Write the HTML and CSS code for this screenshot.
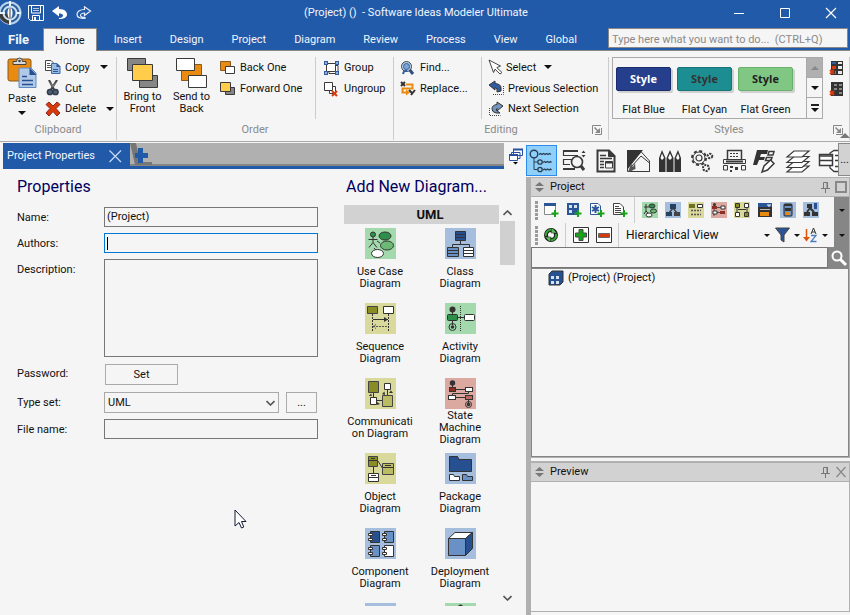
FILE: index.html
```html
<!DOCTYPE html>
<html lang="en">
<head>
<meta charset="utf-8">
<title>(Project) () - Software Ideas Modeler Ultimate</title>
<link rel="stylesheet" href="styles.css">
</head>
<body>
<header class="titlebar">
  <div class="quick">
    <svg class="logo" width="22" height="24" viewBox="0 0 22 24"><circle cx="10" cy="12" r="10.500" fill="#2d5f9c" stroke="#b9d3ea" stroke-width="2"/><path d="M0 13H9V23Q3 22 0 17Z" fill="#3c3c3c"/><circle cx="10" cy="12" r="6.500" fill="none" stroke="#cfe2f2" stroke-width="2"/><path d="M10 0V5M10 19v5M16 12h5M0 12h5" stroke="#e8f2fa" stroke-width="2"/><ellipse cx="10" cy="12" rx="2.500" ry="5.500" fill="#fff"/><path d="M10 7v11" stroke="#9d9d9d" stroke-width="2"/></svg>
    <button aria-label="Save"><svg width="16" height="16" viewBox="0 0 16 16"><path d="M.5.500H15.500V15.500H2.500L.5 13.500Z" fill="none" stroke="#fff"/><path d="M3.500.500V8H12.500V.500M4.500 15.500V10.500H11.500V15.500" fill="none" stroke="#fff"/><path d="M5 3.500H11M5 5.500H11" stroke="#b7c9e6"/><path d="M6 12h2v3H6z" fill="#fff"/></svg></button>
    <button aria-label="Undo"><svg width="16" height="14" viewBox="0 0 16 14"><path d="M0 5 7 0V3C13 3 15 6 15 8.500C15 11 12.500 13 7 13V12C10 12 11 10.500 11 9.500C11 8 9 7.500 7 7.500V10.500Z" fill="#fff"/></svg></button>
    <button aria-label="Redo"><svg width="16" height="14" viewBox="0 0 16 14"><path d="M14.500 5 8.500.800V3.500C3.500 3.500 1 6 1 8.500C1 11 3.500 12.500 9 12.500V11.500C6 11.500 4.500 10.500 4.500 9.500C4.500 8 6.500 7 8.500 7V9.500Z" fill="none" stroke="#e7eefa" stroke-width="1.200"/></svg></button>
  </div>
  <h1 class="apptitle">(Project) () &nbsp;- Software Ideas Modeler Ultimate</h1>
  <div class="winbtns">
    <button aria-label="Minimize"><svg width="12" height="12"><path d="M1 6.500H11" stroke="#fff"/></svg></button>
    <button aria-label="Maximize"><svg width="12" height="12"><path d="M1.500 1.500H10.500V10.500H1.500Z" fill="none" stroke="#fff"/></svg></button>
    <button aria-label="Close"><svg width="12" height="12"><path d="M1 1 11 11M11 1 1 11" stroke="#fff" stroke-width="1.200"/></svg></button>
  </div>
</header>
<nav class="tabs">
  <button class="file">File</button><button class="active">Home</button><button>Insert</button><button>Design</button><button>Project</button><button>Diagram</button><button>Review</button><button>Process</button><button>View</button><button>Global</button>
  <input class="tellme" aria-label="Command search" placeholder="Type here what you want to do...  (CTRL+Q)">
</nav>
<section class="ribbon">
  <div class="group">
    <div class="tools">
      <button class="big paste"><svg width="30" height="32" viewBox="0 0 30 32"><rect x="1" y="2" width="23" height="22" rx="2" fill="#e88b10" stroke="#8a5a1c"/><path d="M6 7.500V4.500H9.500Q9.500 1 12.500 1T15.500 4.500H19V7.500Z" fill="#d9d9d9" stroke="#444"/><circle cx="12.500" cy="4" r="1.300" fill="#444"/><path d="M12 11H24L29 16V30.500H12Z" fill="#b0c9e8" stroke="#5e8ac4"/><path d="M22.500 10.500V18H29.500Z" fill="#26508f"/><path d="M15 19.500h5M15 23.500H26M15 27.500H26" stroke="#26508f" stroke-width="1.500"/></svg>Paste<i class="arr"></i></button>
      <div class="stack">
        <button><svg width="16" height="16" viewBox="0 0 16 16"><path d="M.5 1.500H6L8.500 4V11.500H.500Z" fill="#fff" stroke="#444"/><path d="M2 4.500H5M2 6.500H6M2 8.500H6" stroke="#555"/><path d="M6.500 4.500H12L15 7.500V14.500H6.500Z" fill="#9bbbe2" stroke="#3a6aaa"/><path d="M11.500 4V8H15.500Z" fill="#2b5597"/><path d="M8 10.500H13M8 12.500H13" stroke="#2b5597"/></svg>Copy<i class="arr"></i></button>
        <button><svg width="16" height="16" viewBox="1 0 16 16"><path d="M5 0 10 9.500M13 0 7 9.500" stroke="#3c3c3c" stroke-width="2"/><path d="M4 0 9 8V5ZM14 0 9 8V5Z" fill="#777"/><circle cx="6" cy="12" r="2.600" fill="#56616f" stroke="#2c3e50" stroke-width="1.500"/><circle cx="11.500" cy="12" r="2.600" fill="#56616f" stroke="#2c3e50" stroke-width="1.500"/></svg>Cut</button>
        <button><svg width="16" height="16" viewBox="0 0 16 16"><path d="M1 3.500 4 1 8 5 12 1 15 3.500 11 7.500 15 12 12 15 8 10.500 4 15 1 12 5 7.500Z" fill="#d93a0c" stroke="#8b2a16"/></svg>Delete<i class="arr"></i></button>
      </div>
    </div>
    <div class="caption">Clipboard</div>
  </div>
  <div class="group">
    <div class="tools">
      <button class="big"><svg width="32" height="32" viewBox="0 0 32 32"><path d="M.5 1.500H18.500V13.500H.500ZM12.500 18.500H30.500V30.500H12.500Z" fill="#868686" stroke="#3a3a3a"/><path d="M5.500 7.500H25.500V23.500H5.500Z" fill="#ffcd4b" stroke="#3a3a3a"/></svg>Bring to<br>Front</button>
      <button class="big"><svg width="32" height="32" viewBox="0 0 32 32"><path d="M5.500 7.500H25.500V23.500H5.500Z" fill="#e88b10" stroke="#8a5a1c"/><path d="M.5 1.500H18.500V13.500H.500ZM12.500 18.500H30.500V30.500H12.500Z" fill="#fff" stroke="#3a3a3a"/></svg>Send to<br>Back</button>
      <div class="stack">
        <button><svg width="16" height="16" viewBox="0 0 16 16"><path d="M.5 1.500H10.500V10.500H.500Z" fill="#e88b10" stroke="#8a5a1c"/><path d="M5.500 6.500H14.500V13.500H5.500Z" fill="#fff" stroke="#3a3a3a"/></svg>Back One</button>
        <button><svg width="16" height="16" viewBox="0 0 16 16"><path d="M5.500 6.500H14.500V13.500H5.500Z" fill="#868686" stroke="#3a3a3a"/><path d="M.5 1.500H10.500V10.500H.500Z" fill="#ffcd4b" stroke="#3a3a3a"/></svg>Forward One</button>
      </div>
      <div class="stack split">
        <button><svg width="16" height="16" viewBox="0 0 16 16"><path d="M2.500 3.500H11.500V11.500H2.500ZM12 5.500H14V13.500H5V12" fill="#fff" stroke="#3a3a3a"/><path d="M0 1h4v4H0zM11 1h4v4h-4zM0 11h4v4H0zM11 11h4v4h-4z" fill="#315d9e"/><path d="M1 2h2v2H1zM12 2h2v2h-2zM1 12h2v2H1zM12 12h2v2h-2z" fill="#8eaede"/></svg>Group</button>
        <button><svg width="16" height="16" viewBox="0 0 16 16"><path d="M.5 1.500H8.500V9.500H.500ZM9 5.500H11.500V12.500H5.500V10" fill="#fff" stroke="#3a3a3a"/><path d="M8 10 13 15M13 10 8 15" stroke="#d93a0c" stroke-width="2"/></svg>Ungroup</button>
      </div>
    </div>
    <div class="caption">Order</div>
  </div>
  <div class="group">
    <div class="tools">
      <div class="stack">
        <button><svg width="16" height="16" viewBox="0 0 16 16"><path d="M9 9 13 14" stroke="#2f4f80" stroke-width="3"/><circle cx="6.500" cy="6.500" r="5" fill="#b9d3ee" stroke="#444"/><circle cx="6.500" cy="6.500" r="3" fill="#7fa4d1" stroke="#315d9e"/><path d="M3 14Q4 10 7 11" fill="none" stroke="#315d9e" stroke-width="2"/></svg>Find...</button>
        <button><svg width="16" height="16" viewBox="0 0 16 16"><path d="M1 1 5 5M5 1 1 5M9 9 12 12M15 9 11 14" stroke="#333" stroke-width="2"/><path d="M6 3.500H12.500V7.500H2.500V11.500H8" fill="none" stroke="#e88b10" stroke-width="2"/><path d="M6 8.500 10 11.500 6 14.500Z" fill="#e88b10"/></svg>Replace...</button>
      </div>
      <div class="stack split">
        <button><svg width="16" height="16" viewBox="0 0 16 16"><path d="M1 1 12.500 7 8.800 8.600 14 13.500 12 15 7 10.200 5.500 13.500Z" fill="#fff" stroke="#444"/></svg>Select<i class="arr"></i></button>
        <button><svg width="18" height="16" viewBox="0 0 18 16"><path d="M1 5 7 1V3.500Q13 4 13 8V11L9 12Q10 8 7 7.500V10Z" fill="#315d9e" stroke="#333"/><path d="M5 14.500H15.500V6" fill="none" stroke="#444" stroke-dasharray="1 1"/></svg>Previous Selection</button>
        <button><svg width="18" height="16" viewBox="0 0 18 16"><path d="M15 5 9 1V3.500Q4 4 4 8Q4 11 8 12H12L8 9 9 7.500V10Z" fill="#7396c0" stroke="#333"/><path d="M1.500 7V14.500H12.500" fill="none" stroke="#444" stroke-dasharray="1 1"/></svg>Next Selection</button>
      </div>
    </div>
    <div class="caption">Editing<button class="launch" aria-label="Editing options"><svg width="10" height="10"><path d="M.5 9V.500H9M9.500 3V9.500H3" fill="none" stroke="#888"/><path d="M2.500 2.500 7 7" stroke="#888" stroke-width="1.500"/><path d="M8 3V8H3Z" fill="#888"/></svg></button></div>
  </div>
  <div class="group">
    <div class="tools">
      <div class="gallery">
        <button class="style"><b class="blue">Style</b>Flat Blue</button>
        <button class="style"><b class="cyan">Style</b>Flat Cyan</button>
        <button class="style"><b class="green">Style</b>Flat Green</button>
        <div class="gscroll"><button class="off" aria-label="Scroll up"><i class="arr up"></i></button><button aria-label="Scroll down"><i class="arr"></i></button><button class="more" aria-label="More styles"><i class="arr"></i></button></div>
      </div>
      <div class="stack bare">
        <button aria-label="Clear style"><svg width="16" height="16" viewBox="0 0 16 16"><path d="M2 1h12v14H2z" fill="#333"/><path d="M3 2h4v2H3z" fill="#315d9e"/><path d="M9 2h4v2H9zM9 6h4v3H9zM9 11h4v3H9z" fill="#e8e8e8"/><path d="M3 6h4v3H3z" fill="#d93a0c"/><path d="M1 10 5 14M5 10 1 14" stroke="#d93a0c" stroke-width="2"/><path d="M6 11h1v3H6z" fill="#52a152"/></svg></button>
        <button aria-label="Clear all styles"><svg width="16" height="16" viewBox="0 0 16 16"><path d="M2 1h12v14H2z" fill="#333"/><path d="M5 3h3v2H5zM10 3h3v2h-3zM5 7h3v2H5zM10 7h3v2h-3zM10 11h3v2h-3z" fill="#888"/><path d="M1 10 5 14M5 10 1 14" stroke="#d93a0c" stroke-width="2"/></svg></button>
      </div>
    </div>
    <div class="caption">Styles<button class="launch" aria-label="Style options"><svg width="10" height="10"><path d="M.5 9V.500H9M9.500 3V9.500H3" fill="none" stroke="#888"/><path d="M2.500 2.500 7 7" stroke="#888" stroke-width="1.500"/><path d="M8 3V8H3Z" fill="#888"/></svg></button></div>
  </div>
  <button class="collapse" aria-label="Collapse ribbon"><svg width="10" height="5"><path d="M0 5 5 0 10 5Z" fill="#777"/></svg></button>
</section>
<main class="main">
  <section class="doc">
    <div class="doctabs"><div class="doctab">Project Properties<button aria-label="Close tab"><svg width="13" height="13"><path d="M.5.500 12 12M12 .500.500 12" stroke="#c9dcf5" stroke-width="1.200"/></svg></button></div><button class="newtab" aria-label="New tab"><svg width="22" height="22" viewBox="0 0 22 22"><path d="M0 0H6Q8 8 9 15L13 19H22V22H5Z" fill="#767676"/><path d="M8 5h5v5h5v5h-5v5H8v-5H5v-5h3z" fill="#225aaa"/></svg></button></div>
    <div class="docbody">
      <form class="props">
        <h2>Properties</h2>
        <div class="row"><label for="name">Name:</label><input id="name" value="(Project)"></div>
        <div class="row"><label for="authors">Authors:</label><input id="authors" class="focus"></div>
        <div class="row"><label for="desc">Description:</label><textarea id="desc"></textarea></div>
        <div class="row"><label for="pw">Password:</label><button type="button" id="pw" class="set">Set</button></div>
        <div class="row"><label for="type">Type set:</label><div class="pick"><select id="type"><option>UML</option></select><svg width="9" height="6"><path d="M.5 1 4.500 5 8.500 1" fill="none" stroke="#555" stroke-width="1.600"/></svg></div><button type="button" class="dots" aria-label="Browse type sets">...</button></div>
        <div class="row"><label for="file">File name:</label><input id="file"></div>
      </form>
      <section class="add">
        <h2>Add New Diagram...</h2>
        <div class="scroller">
          <div class="list">
            <h3>UML</h3>
            <div class="grid">
              <button><svg class="g" viewBox="0 0 31 31"><circle cx="8" cy="6.500" r="2.500" fill="#2e8f4b" stroke="#333"/><path d="M8 9V14.500L4 19.500M8 14.500 12 19.500M3.500 11.500H12.500M12 13 15 15M9 20 11 22" stroke="#333" fill="none"/><ellipse cx="20" cy="8" rx="6" ry="4" fill="#2e8f4b" stroke="#333"/><ellipse cx="22" cy="17.500" rx="6.500" ry="4.500" fill="#6cba74" stroke="#333"/><ellipse cx="12.500" cy="25.500" rx="6" ry="4" fill="#fff" stroke="#333"/></svg><span>Use Case Diagram</span></button>
              <button><svg class="b" viewBox="0 0 31 31"><path d="M15.500 12V17M7.500 20V16.500H24.500V20" stroke="#333" fill="none"/><path d="M10.500 3.500H20.500V12.500H10.500Z" fill="#26508f" stroke="#333"/><path d="M2.500 19.500H13.500V28.500H2.500Z" fill="#6a91c5" stroke="#333"/><path d="M18.500 19.500H28.500V28.500H18.500Z" fill="#fff" stroke="#333"/><path d="M10 6.500H21M10 9.500H21M2 22.500H13M2 25.500H13M18 22.500H29M18 25.500H29" stroke="#333"/></svg><span>Class Diagram</span></button>
              <button><svg class="y" viewBox="0 0 31 31"><path d="M2.500 3.500H12.500V10.500H2.500Z" fill="#8a8c26" stroke="#444"/><path d="M18.500 3.500H28.500V10.500H18.500Z" fill="#fff" stroke="#333"/><path d="M7.500 11V29M23.500 11V29" stroke="#333" stroke-dasharray="2 1"/><path d="M8 16.500H23" stroke="#333"/><path d="M19 14V19L23 16.500Z" fill="#333"/><path d="M8 23.500H23M11 21.500 8 23.500 11 25.500" stroke="#555" stroke-dasharray="2 1" fill="none"/></svg><span>Sequence Diagram</span></button>
              <button><svg class="g" viewBox="0 0 31 31"><path d="M7.500 8V22M12 14.500H20" stroke="#333"/><circle cx="7.500" cy="6.500" r="3" fill="#333"/><rect x="2.500" y="11.500" width="10" height="6" rx="1" fill="#2e8f4b" stroke="#333"/><rect x="19.500" y="11.500" width="10" height="6" rx="1" fill="#fff" stroke="#333"/><path d="M15.500 3V29" stroke="#333" stroke-dasharray="1 1"/><circle cx="7.500" cy="24" r="3.500" fill="none" stroke="#333"/><circle cx="7.500" cy="24" r="1.800" fill="#333"/></svg><span>Activity Diagram</span></button>
              <button><svg class="y" viewBox="0 0 31 31"><path d="M8.500 14V19M12 22.500H17M22.500 12V17" stroke="#333"/><path d="M3.500 3.500H13.500V14.500H3.500Z" fill="#8a8c26" stroke="#444"/><path d="M19.500 5.500H25.500V11.500H19.500Z" fill="#fff" stroke="#333"/><path d="M17.500 17.500H27.500V28.500H17.500Z" fill="#b9bc62" stroke="#444"/><path d="M5.500 19.500H11.500V26.500H5.500Z" fill="#fff" stroke="#333"/><path d="M4 18 6 15.500 7 18ZM12 24 15 26 12 27ZM17 16 19.500 13.500 20 17ZM24 15H28L26 12.500Z" fill="#333"/></svg><span>Communication Diagram</span></button>
              <button><svg class="r" viewBox="0 0 31 31"><path d="M7.500 7V10M11 11.500H20M7.500 17V15.500H23.500V14M11 19.500H20M23.500 21V25" stroke="#333" fill="none"/><circle cx="7.500" cy="5" r="2.700" fill="#333"/><rect x="4.500" y="9.500" width="6" height="4" fill="#8d2f25" stroke="#333"/><rect x="20.500" y="9.500" width="7" height="4" fill="#fff" stroke="#333"/><rect x="3.500" y="17.500" width="7" height="4" fill="#fff" stroke="#333"/><rect x="20.500" y="17.500" width="7" height="4" fill="#bf6a60" stroke="#333"/><circle cx="23.500" cy="26.500" r="3" fill="none" stroke="#333"/><circle cx="23.500" cy="26.500" r="1.800" fill="#333"/></svg><span>State Machine Diagram</span></button>
              <button><svg class="y" viewBox="0 0 31 31"><path d="M8.500 14V20M13 8 18 16" stroke="#333"/><path d="M3.500 3.500H12.500V13.500H3.500Z" fill="#8a8c26" stroke="#444"/><path d="M17.500 10.500H28.500V21.500H17.500Z" fill="#b9bc62" stroke="#444"/><path d="M3.500 20.500H13.500V28.500H3.500Z" fill="#fff" stroke="#333"/><path d="M3 7.500H12M18 14.500H28M3 24.500H13M6 5.500H10M20 12.500H26M6 22.500H11" stroke="#333"/></svg><span>Object Diagram</span></button>
              <button><svg class="b" viewBox="0 0 31 31"><path d="M4.500 18.500V3.500H12.500L14 6.500H26.500V18.500Z" fill="#26508f" stroke="#333"/><path d="M4.500 27.500V21.500H8.500L9.500 23.500H14.500V27.500Z" fill="#fff" stroke="#333"/><path d="M17.500 27.500V21.500H21.500L22.500 23.500H27.500V27.500Z" fill="#6a91c5" stroke="#333"/></svg><span>Package Diagram</span></button>
              <button><svg class="b" viewBox="0 0 31 31"><path d="M5.500 3.500H14.500V14.500H5.500Z" fill="#26508f" stroke="#333"/><path d="M19.500 3.500H28.500V14.500H19.500ZM5.500 17.500H14.500V28.500H5.500Z" fill="#6a91c5" stroke="#333"/><path d="M19.500 17.500H28.500V28.500H19.500Z" fill="#fff" stroke="#333"/><path d="M3.500 5.500h4v2h-4zM3.500 10.500h4v2h-4zM17.500 5.500h4v2h-4zM17.500 10.500h4v2h-4zM3.500 19.500h4v2h-4zM3.500 24.500h4v2h-4zM17.500 19.500h4v2h-4zM17.500 24.500h4v2h-4z" fill="#fff" stroke="#333"/></svg><span>Component Diagram</span></button>
              <button><svg class="b" viewBox="0 0 31 31"><path d="M3.500 10.500H20.500V27.500H3.500Z" fill="#6a91c5" stroke="#333"/><path d="M3.500 10.500 10 4.500H27.500L20.500 10.500Z" fill="#fff" stroke="#333"/><path d="M20.500 10.500 27.500 4.500V20.500L20.500 27.500Z" fill="#26508f" stroke="#333"/></svg><span>Deployment Diagram</span></button>
              <button aria-label="Composite structure diagram"><svg class="b" viewBox="0 0 31 31"></svg></button>
              <button aria-label="Interaction overview diagram"><svg class="g" viewBox="0 0 31 31"><circle cx="15.500" cy="4" r="2.500" fill="#333"/></svg></button>
            </div>
          </div>
          <div class="sbar"><svg width="9" height="6"><path d="M.5 5 4.500 1 8.500 5" fill="none" stroke="#555" stroke-width="1.600"/></svg><i></i><svg width="9" height="6"><path d="M.5 1 4.500 5 8.500 1" fill="none" stroke="#555" stroke-width="1.600"/></svg></div>
        </div>
      </section>
    </div>
    <button class="windows" aria-label="Window list"><svg width="15" height="17" viewBox="0 0 15 17"><path d="M5.500 1.500H14.500V7.500H5.500ZM3.500 4.500H12V10.500H3.500Z" fill="#fff" stroke="#2850a0"/><path d="M1.500 6.500H9.500V12.500H1.500Z" fill="#fff" stroke="#2850a0"/><path d="M5 1.500H15M1 7H10" stroke="#2850a0" stroke-width="2"/><path d="M5 14H10L7.500 16.500Z" fill="#000"/></svg></button>
    <svg class="pointer" width="13" height="20" viewBox="0 0 13 20"><path d="M1 1V17L5 13.500 7.500 19 9.800 18 7.500 12.500H12Z" fill="#fff" stroke="#111a33"/></svg>
  </section>
  <aside class="side">
    <div class="views">
      <button class="on" aria-label="Project"><svg width="26" height="26" viewBox="0 0 26 26" fill="none" stroke="#2b3f52"><circle cx="5" cy="6" r="3.800" stroke-width="1.400"/><circle cx="11" cy="14" r="2.200" stroke-width="1.300"/><circle cx="11" cy="21.500" r="2.200" stroke-width="1.300"/><path d="M5 10V21.500H8.500M5 14H8.500"/><path d="M10 6.500l1.500-1 1.500 1 1.500-1 1.500 1 1.500-1 1.500 1 1.500-1 1.500 1M14 14.500l1.500-1 1.500 1 1.500-1 1.500 1 1.500-1 1 1M14 22l1.500-1 1.500 1 1.500-1 1.500 1 1.500-1 1 1" stroke-width="1.300"/></svg></button>
      <button aria-label="Find"><svg width="26" height="26" viewBox="0 0 26 26" fill="none" stroke="#3a3a3a"><path d="M17 2.500H2.500V7.500H17M11 11.500H2.500V16.500H9M13 21.500H2.500" stroke-width="1.200"/><path d="M2 2h15v2H2zM2 20h12v2H2z" fill="#3a3a3a" stroke="none"/><circle cx="16" cy="14" r="5.500" stroke-width="1.600"/><path d="M20 18 23 22" stroke-width="3"/><path d="M20.500 7H24.500L22.500 9.500ZM20.500 5H24.500L22.500 2.500Z" fill="#3a3a3a" stroke="none"/></svg></button>
      <button aria-label="Documentation"><svg width="26" height="26" viewBox="0 0 26 26" fill="none" stroke="#3a3a3a"><path d="M4.500 2.500H16L21.500 8V23.500H4.500Z" stroke-width="2"/><path d="M15.500 2V8.500H22Z" fill="#3a3a3a"/><path d="M7 7.500H13M7 10.500H19M7 13.500H11M7 16.500H11M7 19.500H11" stroke-width="1.500"/><path d="M12.500 13.500H19.500V20H12.500Z"/><path d="M12.500 14.500H19.500" stroke-width="2"/></svg></button>
      <button aria-label="Style"><svg width="26" height="26" viewBox="0 0 26 26"><path d="M2.500 2.500H15L24.500 13V23.500H2.500Z" fill="#f5f5f5" stroke="#3a3a3a"/><path d="M2 2H18L2 22Z" fill="#333"/><path d="M6 19 16 8 24.500 15V23.500H7Z" fill="#f5f5f5" stroke="#3a3a3a"/><path d="M3 24 6 16 8 19 10 15 10.500 21Z" fill="#555"/></svg></button>
      <button aria-label="Colors"><svg width="26" height="26" viewBox="0 0 26 26"><path d="M2 10 5 2 8.500 10V24H2ZM9.500 10 13 2 16.500 10V24H9.500ZM17.500 10 21 2 24 10V24H17.500Z" fill="#333"/><path d="M3.500 10 5 5.500 7 10 5 12ZM11 10 13 5.500 15 10 13 12ZM19 10 21 5.500 22.500 10 21 12Z" fill="#fff"/></svg></button>
      <button aria-label="Settings"><svg width="26" height="26" viewBox="0 0 26 26" fill="none" stroke="#3a3a3a"><circle cx="10" cy="10" r="7" stroke-width="2" stroke-dasharray="3 2.500"/><circle cx="10" cy="10" r="6"/><circle cx="10" cy="10" r="3" stroke-width="1.200"/><circle cx="21" cy="8" r="2.300" stroke-width="2" stroke-dasharray="2 1"/><circle cx="17" cy="20" r="3" stroke-width="2" stroke-dasharray="2 1"/></svg></button>
      <button aria-label="Generate"><svg width="26" height="26" viewBox="0 0 26 26" fill="none" stroke="#3a3a3a"><path d="M6.500 11V2.500H20.500V11" stroke-width="1.500"/><path d="M9 5.500H18M9 8.500H18" stroke-dasharray="2 1"/><path d="M2.500 15.500V11.500H24.500V15.500Z"/><path d="M5 13.500H22" stroke-width="2"/><path d="M2.500 17.500H6.500V22H2.500ZM20.500 17.500H24.500V22H20.500Z"/><path d="M9 18h3v2H9zM14 19h3v3h-3zM9 22h2v2H9z" fill="#3a3a3a" stroke="none"/></svg></button>
      <button aria-label="Format"><svg width="26" height="26" viewBox="0 0 26 26"><path d="M4 2H15L14 6H8L7 9H12L11 12H6L4 17H0Z" fill="#333"/><path d="M16 3.500H21L20 7H15ZM13.500 9.500H19L18 12.500H12.500Z" fill="#fff" stroke="#3a3a3a" stroke-width="1.500"/><path d="M9 24 11 18 17.500 12 21 15.500 14.500 22Z" fill="#fff" stroke="#3a3a3a" stroke-width="1.500"/></svg></button>
      <button aria-label="Layers"><svg width="26" height="26" viewBox="0 0 26 26" fill="#fff" stroke="#3a3a3a" stroke-width="1.200"><path d="M2 24 9 18H24L17 24Z"/><path d="M2 19.500 9 13.500H24L17 19.500Z"/><path d="M2 14.500 9 8.500H24L17 14.500Z"/><path d="M2 9 9 3H24L17 9Z"/></svg></button>
      <button aria-label="Model"><svg width="26" height="26" viewBox="0 0 26 26" fill="#fff" stroke="#3a3a3a"><path d="M13 8V5L17 2.500H25V23.500H17L13 20V17" stroke-width="1.300"/><path d="M2.500 6.500H15.500V17.500H2.500Z" stroke-width="1.500"/><path d="M2 8H16M3 12.500H15M18 7.500H25M18 12.500H25M18 18.500H25" stroke-width="1.500"/></svg></button>
      <button class="etc">...</button>
    </div>
    <div class="panels">
      <section class="panel proj">
        <header><svg width="9" height="10"><path d="M0 4 4.500 0 9 4ZM0 6H9L4.500 10Z" fill="#777"/></svg><h2>Project</h2><svg width="11" height="12"><path d="M3.500 7V1.500H7.500V7M1 7.500H10M5.500 8V12" fill="none" stroke="#777"/><path d="M7 1V7" stroke="#777"/></svg><svg width="12" height="12"><path d="M1 1H11V11H1Z" fill="none" stroke="#888" stroke-width="2"/></svg></header>
        <div class="bar">
          <i class="grip"></i>
          <button aria-label="New diagram"><svg width="16" height="16" viewBox="0 0 16 16"><path d="M1.500 1.500H12.500V12.500H1.500Z" fill="#fff" stroke="#888"/><path d="M1 1h12v3H1z" fill="#2b5597"/><path d="M12 8v7M8.500 11.500h7" stroke="#18a318" stroke-width="2"/></svg></button>
          <button aria-label="New project"><svg width="16" height="16" viewBox="0 0 16 16"><path d="M1 1h12v12H1z" fill="#2b5597"/><path d="M3 3h3v3H3zM8 3h3v3H8zM3 8h3v3H3z" fill="#d3e1f3"/><path d="M12 8v7M8.500 11.500h7" stroke="#18a318" stroke-width="2"/></svg></button>
          <button aria-label="New element"><svg width="16" height="16" viewBox="0 0 16 16"><path d="M1.500 1.500H9L11.500 4V12.500H1.500Z" fill="#fff" stroke="#2b5597"/><path d="M6.500 3v8M3 5l7 4M10 5 3 9" stroke="#2b5597" stroke-width="2"/><path d="M12 8v7M8.500 11.500h7" stroke="#18a318" stroke-width="2"/></svg></button>
          <button aria-label="New document"><svg width="16" height="16" viewBox="0 0 16 16"><path d="M1.500 1.500H8L11.500 5V12.500H1.500Z" fill="#fff" stroke="#444"/><path d="M3 4.500H7M3 6.500H9M3 8.500H9M3 10.500H9" stroke="#444"/><path d="M12 8v7M8.500 11.500h7" stroke="#18a318" stroke-width="2"/></svg></button>
          <i class="vr"></i>
          <button aria-label="Use case diagram"><svg class="g" width="16" height="16" viewBox="0 0 16 16"><path d="M4 2V9M2 5H7M4 9 2 12M4 9l3 3" stroke="#333"/><ellipse cx="10" cy="4" rx="3" ry="2" fill="#2e8f4b" stroke="#333"/><ellipse cx="11.500" cy="9" rx="3" ry="2" fill="#6cba74" stroke="#333"/><ellipse cx="7" cy="13" rx="3" ry="2" fill="#fff" stroke="#333"/></svg></button>
          <button aria-label="Class diagram"><svg class="b" width="16" height="16" viewBox="0 0 16 16"><path d="M8 6 4 11M8 6l4 5" stroke="#444" stroke-width="1.500"/><path d="M5 2h6v5H5zM1 10h6v4H1z" fill="#26405f"/><path d="M9 10h6v4H9z" fill="#444"/></svg></button>
          <button aria-label="Sequence diagram"><svg class="y" width="16" height="16" viewBox="0 0 16 16"><path d="M1 2h6v4H1z" fill="#6f7126"/><path d="M9.500 2.500h5v3h-5z" fill="#fff" stroke="#333"/><path d="M3 8.500H13M3 12.500H13" stroke="#555" stroke-width="1.500" stroke-dasharray="2 1"/></svg></button>
          <button aria-label="State machine diagram"><svg class="r" width="16" height="16" viewBox="0 0 16 16"><path d="M3 2V14M3 5.500H13M3 10.500H13" stroke="#555"/><circle cx="3.500" cy="2.500" r="1.500" fill="#333"/><path d="M1 4h5v3H1zM9 9h5v3H9z" fill="#8d2f25"/><path d="M10 4h4v3h-4zM2 9h4v3H2z" fill="#fff" stroke="#333"/></svg></button>
          <button aria-label="Flowchart"><svg class="y" width="16" height="16" viewBox="0 0 16 16"><path d="M3 6V10M13 6V10M4 7.500H12" stroke="#333"/><path d="M1.500 1.500h4v4h-4zM10.500 10.500h4v4h-4z" fill="#8a8c26" stroke="#333"/><path d="M10.500 1.500h4v4h-4zM1.500 10.500h4v4h-4z" fill="#fff" stroke="#333"/></svg></button>
          <button aria-label="User interface diagram"><svg width="16" height="16" viewBox="0 0 16 16"><path d="M1 1h14v14H1z" fill="#333"/><path d="M1 1h14v4H1z" fill="#2b5597"/><path d="M3 10h9v4H3z" fill="#e88b10"/><path d="M3 7.500h10" stroke="#bbb"/><path d="M11 2v2h2V2" fill="none" stroke="#fff"/></svg></button>
          <button aria-label="Robustness diagram"><svg class="b" width="16" height="16" viewBox="0 0 16 16"><rect x="4" y="2" width="8" height="12" rx="1" fill="#6a91c5" stroke="#222"/><path d="M4 2h8v2H4zM5 6h6v3H5z" fill="#333"/><path d="M6 10h4v3H6z" fill="#e88b10"/></svg></button>
          <button aria-label="Class diagram from model"><svg class="b" width="16" height="16" viewBox="0 0 16 16"><path d="M4 2h5v4H4zM1 10h6v4H1z" fill="#333"/><path d="M11 1h3v6h-3z" fill="#26508f"/><path d="M9 10h6v4H9z" fill="#333"/><path d="M7 6 4 10M7 6l4 4" stroke="#333" stroke-width="2"/></svg></button>
          <button class="over" aria-label="More tools"><i class="arr sm"></i></button>
        </div>
        <div class="bar two">
          <i class="grip"></i>
          <button aria-label="Refresh"><svg width="16" height="16" viewBox="0 0 16 16"><circle cx="8" cy="8" r="5" fill="none" stroke="#222" stroke-width="4"/><path d="M3 9A5 5 0 0 1 11 4M13 7A5 5 0 0 1 5 12" fill="none" stroke="#35a035" stroke-width="2"/><path d="M9 1 14 6H8ZM7 15 2 10H8Z" fill="#58c058" stroke="#222" stroke-width=".5"/></svg></button>
          <i class="vr"></i>
          <button aria-label="Expand all"><svg width="16" height="16" viewBox="0 0 16 16"><path d="M.5.500H15.500V15.500H.500Z" fill="#fff" stroke="#333"/><path d="M6 2.500H10V6H13.500V10H10V13.500H6V10H2.500V6H6Z" fill="#18a318" stroke="#444"/></svg></button>
          <button aria-label="Collapse all"><svg width="16" height="16" viewBox="0 0 16 16"><path d="M.5.500H15.500V15.500H.500Z" fill="#fff" stroke="#333"/><path d="M2.500 6.500H13.500V10.500H2.500Z" fill="#d93a0c" stroke="#666"/></svg></button>
          <i class="vr"></i>
          <button class="mode">Hierarchical View<i class="arr sm"></i></button>
          <button class="drop" aria-label="Filter"><svg width="15" height="16" viewBox="0 0 15 16"><path d="M.5 1H14.500L9 8V15L6 13V8Z" fill="#2b5597" stroke="#444"/></svg><i class="arr sm"></i></button>
          <button class="drop" aria-label="Sort"><svg width="15" height="16" viewBox="0 0 15 16"><path d="M3.500 2V12" stroke="#e0540c" stroke-width="1.500"/><path d="M0 10H7L3.500 14.500Z" fill="#e0540c"/><path d="M8 7 10.500 1 13 7M9 5H12" fill="none" stroke="#333"/><path d="M8 8.500H13L8 14.500H13.500" fill="none" stroke="#4f7dc0" stroke-width="1.300"/></svg><i class="arr sm"></i></button>
          <button class="over" aria-label="More options"><i class="arr sm"></i></button>
        </div>
        <div class="find"><input aria-label="Search project"><button aria-label="Search"><svg width="18" height="18" viewBox="0 0 18 18"><circle cx="7" cy="7" r="4.500" fill="none" stroke="#fff" stroke-width="2"/><path d="M10.500 10.500 16 16" stroke="#fff" stroke-width="3"/></svg></button></div>
        <div class="tree"><a href="#project"><svg width="16" height="16" viewBox="0 0 16 16"><path d="M1 4 4 1H15V12L12 15H1Z" fill="#26508f" stroke="#333"/><path d="M3 6h3v3H3zM8 6h3v3H8zM3 11h3v3H3zM8 11h3v3H8z" fill="#d3e1f3"/></svg>(Project) (Project)</a></div>
      </section>
      <section class="panel prev">
        <header><svg width="9" height="10"><path d="M0 4 4.500 0 9 4ZM0 6H9L4.500 10Z" fill="#777"/></svg><h2>Preview</h2><svg width="11" height="12"><path d="M3.500 7V1.500H7.500V7M1 7.500H10M5.500 8V12" fill="none" stroke="#777"/><path d="M7 1V7" stroke="#777"/></svg><svg width="12" height="12"><path d="M1.500 1 10.500 11M10.500 1 1.500 11" fill="none" stroke="#888" stroke-width="1.200"/></svg></header>
        <div class="canvas"></div>
      </section>
    </div>
  </aside>
</main>
</body>
</html>
```
FILE: styles.css
```css
* { box-sizing: border-box; }

body {
  margin: 0;
  height: 100vh;
  display: flex;
  flex-direction: column;
  overflow: hidden;
  background: #f5f5f5;
  color: #111;
  font: 11px/14px Roboto, "Liberation Sans", sans-serif;
}

button, input, select, textarea { font: inherit; color: inherit; border-radius: 0; }
button { border: 0; padding: 0; margin: 0; background: none; }
svg { flex: none; display: block; }
h1, h2, h3 { margin: 0; font-weight: 400; }

.arr {
  flex: none;
  border: 4px solid transparent;
  border-top-color: #111;
  border-bottom: 0;
}
.arr.sm { border-width: 3px 3px 0; }
.arr.up { border-top: 0; border-bottom: 4px solid #888; }

/* title bar */
.titlebar {
  display: grid;
  grid-template-columns: 1fr auto 1fr;
  align-items: center;
  height: 27px;
  padding-bottom: 2px;
  background: #225aaa;
  color: #f2f6fc;
}
.quick { display: flex; align-items: center; gap: 8px; }
.quick .logo { margin-right: -2px; }
.apptitle { font-size: 11px; padding-right: 18px; }
.winbtns { display: flex; justify-content: flex-end; gap: 34px; padding-right: 13px; }

/* tabs */
.tabs {
  display: flex;
  height: 24px;
  background: #225aaa;
  color: #f2f6fc;
  border-bottom: 1px solid #888;
}
.tabs button { padding: 3px 14px 0; }
.tabs .file { font-weight: 700; font-size: 13px; padding: 3px 14px 0 8px; }
.tabs .active {
  background: #f5f5f5;
  color: #111;
  border: 1px solid #888;
  border-bottom: 0;
  margin: 1px 3px -1px 0;
  padding: 1px 11px 0;
}
.tellme {
  width: 240px;
  height: 20px;
  margin: 1px 2px 0 auto;
  padding: 2px 3px 0;
  border: 1px solid #888;
  background: #f5f5f5;
}
.tellme::placeholder { color: #8a8a8a; opacity: 1; white-space: pre; }

/* ribbon */
.ribbon {
  position: relative;
  display: grid;
  grid-template-columns: 117px 277px 215px 1fr;
  height: 91px;
  border-bottom: 1px solid #aaa;
}
.group {
  display: flex;
  flex-direction: column;
  margin: 6px 0 5px;
  border-right: 1px solid #ccc;
}
.tools { display: flex; height: 62px; padding-left: 7px; }
.caption { position: relative; text-align: center; color: #8a8a8a; line-height: 21px; }
.launch { position: absolute; right: 6px; top: 6px; }
.big {
  display: flex;
  flex-direction: column;
  align-items: center;
  width: 49px;
  line-height: 12px;
}
.big svg { margin-bottom: 2px; }
.paste { width: 30px; margin-right: 8px; }
.paste svg { margin-bottom: 4px; }
.paste .arr { margin-top: 6px; }
.stack { display: flex; flex-direction: column; }
.stack button { display: flex; align-items: center; gap: 4px; height: 21px; line-height: 15px; white-space: nowrap; }
.stack .arr { margin-left: 6px; }
.group:nth-child(2) .tools { padding-left: 1px; }
.group:nth-child(2) .stack { margin-left: 4px; }
.stack.split { margin-left: auto; border-left: 1px solid #ccc; padding-left: 8px; }
.group:nth-child(2) .stack.split { margin-left: auto; width: 78px; }
.group:nth-child(3) .tools { padding-left: 6px; }
.group:nth-child(3) .stack.split { width: 127px; padding-left: 6px; }
.group:nth-child(3) .stack.split button { gap: 2px; }

.group:last-child { border-right: 0; }
.group:nth-child(4) .tools { padding-left: 3px; gap: 6px; }
.gallery { display: flex; width: 211px; border: 1px solid #aaa; }
.style { width: 61px; display: flex; flex-direction: column; align-items: center; gap: 12px; padding-top: 9px; white-space: nowrap; }
.style b {
  width: 55px;
  border: 1px solid;
  border-radius: 2px;
  font: 700 11px/22px "Open Sans", sans-serif;
  box-shadow: 2px 2px 0 #d0d0d0;
}
.style .blue { background: #263f8c; border-color: #182c6e; color: #fff; }
.style .cyan { background: #1c8e92; border-color: #157578; color: #333; }
.style .green { background: #81c784; border-color: #68b36c; color: #222; }
.gscroll { margin-left: auto; width: 16px; border-left: 1px solid #aaa; display: grid; grid-template-rows: repeat(3, 20px); }
.gscroll button { display: flex; flex-direction: column; align-items: center; justify-content: center; border-bottom: 1px solid #aaa; }
.gscroll .off { background: #b0b0b0; }
.gscroll .more { border-bottom: 0; }
.more::before { content: ""; width: 8px; height: 2px; margin-bottom: 2px; background: #222; }
.collapse { position: absolute; right: 0; bottom: 3px; }

/* work area */
.main { flex: 1; display: flex; min-height: 0; }
.doc { position: relative; flex: 1; display: flex; flex-direction: column; min-width: 0; }
.doctabs {
  display: flex;
  height: 26px;
  margin: 1px 22px 0 3px;
  background: #b0b0b0;
  border-bottom: 3px solid #225aaa;
  box-shadow: inset 0 -2px 0 #868686;
}
.doctab {
  display: flex;
  align-items: center;
  justify-content: space-between;
  width: 127px;
  margin-bottom: -3px;
  padding: 0 8px 0 4px;
  background: #225aaa;
  color: #f2f6fc;
  white-space: nowrap;
}
.newtab { display: flex; }
.windows { position: absolute; right: 3px; top: 6px; }
.pointer { position: absolute; left: 234px; top: 367px; }

.docbody { flex: 1; display: flex; min-height: 0; padding: 9px 11px 9px 17px; }
.docbody h2 { font-size: 16px; line-height: 18px; color: #00005f; }
.props { width: 301px; display: flex; flex-direction: column; gap: 6px; }
.props h2 { margin-bottom: 5px; }
.row { display: flex; min-height: 20px; }
.row label { width: 87px; height: 20px; flex: none; line-height: 22px; }
.row input, .row textarea, .row select {
  flex: 1;
  min-width: 0;
  background: #f5f5f5;
  border: 1px solid #777;
  padding: 0 2px;
  margin: 0;
  resize: none;
  outline: 0;
}
.row textarea { height: 98px; }
.row .focus {
  border-color: #0078d7;
  background: linear-gradient(#000, #000) 2px 3px / 1px 13px no-repeat #f5f5f5;
}
.row .set, .row .dots { border: 1px solid #aaa; }
.row .set { width: 73px; height: 21px; margin: 1px; }
.row .dots { width: 31px; height: 21px; margin: 0 1px 0 7px; }
.pick { position: relative; flex: 1; display: flex; }
.row select {
  height: 21px;
  border-color: #aaa;
  appearance: none;
  padding-left: 3px;
}
.pick svg { position: absolute; right: 4px; top: 8px; pointer-events: none; }

.add { flex: 1; display: flex; flex-direction: column; min-width: 0; padding-left: 26px; }
.add h2 { margin: 0 0 8px 2px; white-space: nowrap; }
.scroller { flex: 1; display: flex; min-height: 0; margin-top: 1px; }
.list { flex: 1; overflow: hidden; }
.list h3 { background: #d2d2d2; text-align: center; font-weight: 700; font-size: 13px; line-height: 19px; padding-left: 17px; }
.grid { display: grid; grid-template-columns: 72px 72px; column-gap: 8px; row-gap: 6px; margin-top: 4px; }
.grid button { display: flex; flex-direction: column; align-items: center; }
.grid svg { width: 31px; height: 31px; }
.grid span { display: flex; align-items: center; justify-content: center; height: 38px; width: 66px; line-height: 12px; overflow-wrap: anywhere; }
.g { background: #a3d9ad; }
.b { background: #a5bedd; }
.y { background: #d8d99a; }
.r { background: #dba9a0; }
.sbar { width: 16px; display: flex; flex-direction: column; align-items: center; padding: 5px 0; }
.sbar i { width: 15px; height: 44px; margin: 5px 0 auto; background: #d0d0d0; }

/* side panels */
.side { width: 324px; flex: none; display: flex; flex-direction: column; }
.views { position: relative; display: flex; height: 35px; padding-top: 3px; overflow: hidden; }
.views button { width: 32px; height: 31px; flex: none; display: flex; align-items: center; justify-content: center; }
.views .on { width: 31px; margin-right: 1px; background: #8fd0fb; border: 1px solid #2a8dee; }
.views .etc { position: absolute; right: 0; top: 1px; width: 12px; height: 33px; background: #d2d2d2; border: 1px solid #888; border-right: 0; }
.panels { flex: 1; display: flex; flex-direction: column; min-height: 0; border-left: 5px solid #b0b0b0; }
.panel { display: flex; flex-direction: column; border: 1px solid #b0b0b0; border-left: 0; }
.panel header { display: flex; align-items: center; gap: 4px; height: 19px; padding: 0 2px 0 4px; background: #d2d2d2; border-bottom: 1px solid #b0b0b0; }
.panel h2 { font-size: 11px; flex: 1; padding-left: 2px; }
.proj { flex: 282 0 0; }
.prev { flex: 150 0 0; margin: 3px 0; border-top-width: 2px; }
.bar { display: flex; align-items: center; height: 26px; padding-left: 4px; }
.bar.two { height: 24px; }
.bar button { width: 23px; height: 100%; display: flex; align-items: center; justify-content: center; }
.grip { width: 3px; height: 19px; margin-right: 1px; background: repeating-linear-gradient(#999 0 3px, #f5f5f5 3px 4px); }
.vr { width: 1px; height: 100%; background: #ccc; margin: 0 3px; }
.bar .mode { flex: 1; justify-content: space-between; padding: 0 3px 0 4px; white-space: nowrap; font-size: 12px; }
.bar .drop { width: 28px; gap: 4px; }
.bar .over { width: 15px; margin-left: auto; background: #868686; }
.bar.two .over { margin-left: 5px; }
.find { display: flex; height: 21px; }
.find input { flex: 1; min-width: 0; border: 1px solid #777; background: #f5f5f5; }
.find button { width: 21px; background: #868686; display: flex; align-items: center; justify-content: center; }
.tree { flex: 1; border: 1px solid #868686; padding: 1px 16px; }
.tree a { display: flex; align-items: center; gap: 4px; color: #111; text-decoration: none; }
.canvas { flex: 1; }
```
